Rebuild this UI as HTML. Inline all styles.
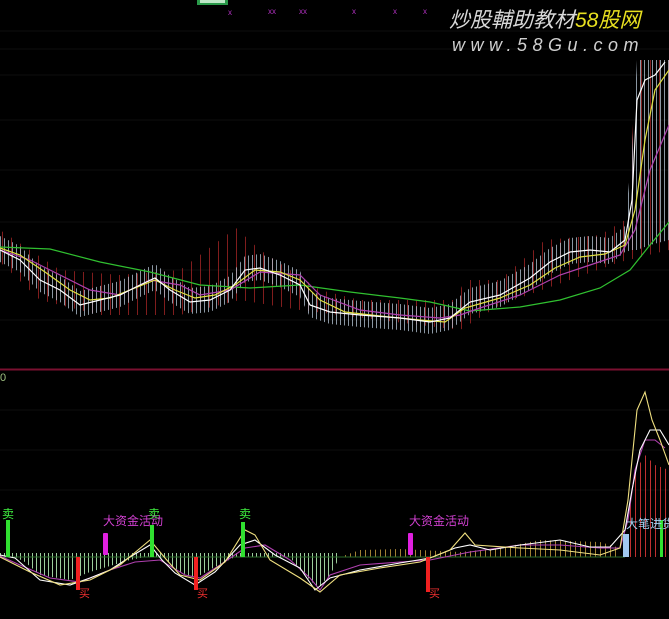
<!DOCTYPE html>
<html><head><meta charset="utf-8"><style>
html,body{margin:0;padding:0;background:#000;width:669px;height:619px;overflow:hidden}
svg{display:block}
text{font-family:"Liberation Sans","Noto Sans CJK SC",sans-serif}
</style></head><body>
<svg width="669" height="619" viewBox="0 0 669 619" xmlns="http://www.w3.org/2000/svg">
<defs>
<pattern id="pw" width="4" height="10" patternUnits="userSpaceOnUse"><rect x="0" y="0" width="1" height="10" fill="#b8c8d8"/></pattern>
<pattern id="pr" width="9" height="10" patternUnits="userSpaceOnUse"><rect x="2" y="0" width="1" height="10" fill="#a02424"/></pattern>
<pattern id="pg" width="4" height="10" patternUnits="userSpaceOnUse"><rect x="0" y="0" width="1" height="10" fill="#b8f0b8"/></pattern>
<pattern id="py" width="5" height="10" patternUnits="userSpaceOnUse"><rect x="0" y="0" width="1" height="10" fill="#c8a040"/></pattern>
<pattern id="pR" width="5" height="10" patternUnits="userSpaceOnUse"><rect x="0" y="0" width="1" height="10" fill="#e03838"/></pattern>
</defs>
<rect width="669" height="619" fill="#000"/>
<g stroke="#0e0e0e" stroke-width="1">
<line x1="0" y1="31" x2="669" y2="31"/><line x1="0" y1="49" x2="669" y2="49"/><line x1="0" y1="75" x2="669" y2="75"/>
<line x1="0" y1="120" x2="669" y2="120"/><line x1="0" y1="170" x2="669" y2="170"/><line x1="0" y1="222" x2="669" y2="222"/><line x1="0" y1="270" x2="669" y2="270"/><line x1="0" y1="320" x2="669" y2="320"/>
<line x1="0" y1="410" x2="669" y2="410"/><line x1="0" y1="450" x2="669" y2="450"/><line x1="0" y1="490" x2="669" y2="490"/>
</g>
<rect x="197" y="0" width="31" height="5" fill="#2a9a4a"/><rect x="200" y="0" width="25" height="3" fill="#bfe8c8"/>
<g fill="#b030c0" font-size="8"><text x="228" y="15">x</text><text x="268" y="14">xx</text><text x="299" y="14">xx</text><text x="352" y="14">x</text><text x="393" y="14">x</text><text x="423" y="14">x</text></g>
<text x="449" y="27" font-size="21" font-style="italic" fill="#d8d8d8">炒股輔助教材<tspan fill="#e8e020">58股网</tspan></text>
<text x="452" y="51" font-size="18" font-style="italic" fill="#d0d0d0" letter-spacing="5.5">www.58Gu.com</text>
<polygon fill="url(#pr)" opacity="0.8" points="0,230 60,270 120,275 180,270 236,228 260,250 320,290 360,300 455,300 465,280 500,280 545,240 600,235 625,220 632,140 637,60 669,60 669,250 620,262 500,305 460,330 300,310 240,300 180,315 100,315 40,300 0,262"/>
<polygon fill="url(#pw)" opacity="0.75" points="0,236 20,246 40,266 60,276 80,291 100,286 120,281 140,271 155,264 170,276 190,288 210,286 230,276 245,256 260,254 280,261 300,271 310,291 330,298 360,301 400,304 430,308 450,304 470,288 500,281 530,264 550,248 570,238 590,236 610,238 625,226 632,150 637,60 669,60 669,240 650,245 637,250 632,250 625,252 610,264 590,262 570,264 550,274 530,290 500,307 470,314 450,330 430,334 400,330 360,327 330,324 310,317 300,297 280,287 260,280 245,282 230,302 210,312 190,314 170,302 155,290 140,297 120,307 100,312 80,317 60,302 40,292 20,272 0,262"/>
<g fill="none" stroke-width="1.2">
<polyline stroke="#30c030" points="0,247 50,249 100,262 150,272 200,285 250,288 300,285 350,292 400,298 430,302 470,311 520,307 560,300 600,288 630,270 650,245 669,222"/>
<polyline stroke="#b040b0" points="0,250 30,260 60,275 90,290 120,295 150,280 180,285 200,295 230,290 260,272 300,275 320,295 360,310 400,315 440,318 460,315 480,308 520,295 560,275 590,265 620,255 635,230 650,170 669,125"/>
<polyline stroke="#e0e040" points="0,248 20,255 45,272 70,290 90,300 110,298 130,290 155,280 175,290 195,298 215,295 235,285 255,270 280,272 300,280 320,300 345,312 380,316 420,320 445,322 465,308 500,298 530,285 555,268 580,257 605,254 625,245 635,210 645,140 655,90 669,70"/>
<polyline stroke="#ffffff" points="0,250 20,260 40,280 60,290 80,305 100,300 120,295 140,285 155,278 170,290 190,302 210,300 230,290 245,270 260,268 280,275 300,285 310,305 330,312 360,315 400,318 430,322 450,318 470,302 500,295 530,278 550,262 570,252 590,250 610,252 625,240 632,200 637,100 645,80 655,75 665,62"/>
</g>
<line x1="0" y1="369.5" x2="669" y2="369.5" stroke="#7a1030" stroke-width="2"/>
<text x="0" y="381" font-size="11" fill="#a0c080">0</text>
<polygon fill="url(#pg)" opacity="0.85" points="15,557 25,562 40,575 70,580 90,572 110,566 130,560 145,557 165,557 175,570 195,578 215,567 235,557 290,557 300,570 318,588 330,575 340,557"/>
<polygon fill="url(#pg)" opacity="0.85" points="0,557 340,557 340,553 0,553"/>
<polygon fill="url(#py)" opacity="0.8" points="340,557 360,550 400,549 460,552 500,548 540,540 600,542 620,548 620,557"/>
<polygon fill="url(#pR)" opacity="0.85" points="628,557 628,520 636,470 645,455 655,465 669,470 669,557"/>
<line x1="0" y1="557" x2="625" y2="557" stroke="#2a6a2a" stroke-width="1"/>
<g fill="none" stroke-width="1.1">
<polyline stroke="#b040b0" points="0,556 20,565 50,578 80,582 110,570 135,562 160,560 185,575 200,578 220,565 245,548 265,545 290,560 310,578 320,590 330,575 360,565 400,562 430,560 470,552 520,545 560,545 600,548 620,548 628,520 635,470 645,440 655,440 665,448"/>
<polyline stroke="#ffffff" points="0,555 15,558 40,580 70,585 90,578 110,570 130,557 150,545 162,560 175,573 195,585 215,572 240,545 255,540 275,555 300,568 315,590 330,578 360,570 400,563 430,558 455,548 470,545 490,550 520,545 560,540 590,547 610,547 625,530 632,490 640,450 650,430 660,430 669,445"/>
<polyline stroke="#f0e080" points="0,557 30,572 60,585 90,580 120,565 150,540 165,558 180,575 200,580 225,562 245,530 255,535 270,560 300,578 320,592 340,575 380,568 420,562 450,550 465,533 475,545 520,548 560,550 600,555 620,548 628,500 637,410 645,392 652,420 660,440 669,465"/>
</g>
<g>
<rect x="6" y="520" width="4" height="37" fill="#30e030"/><text x="2" y="518" font-size="12" fill="#40f040">卖</text>
<rect x="150" y="525" width="4" height="32" fill="#30e030"/><text x="148" y="518" font-size="12" fill="#40f040">卖</text>
<rect x="241" y="522" width="4" height="35" fill="#30e030"/><text x="239" y="518" font-size="12" fill="#40f040">卖</text>
<rect x="103" y="533" width="5" height="22" rx="1" fill="#e020e0"/><text x="103" y="525" font-size="12" fill="#d040d0">大资金活动</text>
<rect x="408" y="533" width="5" height="22" rx="1" fill="#e020e0"/><text x="409" y="525" font-size="12" fill="#d040d0">大资金活动</text>
<rect x="76" y="557" width="4" height="33" fill="#f02020"/><text x="79" y="597" font-size="11" fill="#f03030">买</text>
<rect x="194" y="557" width="4" height="33" fill="#f02020"/><text x="197" y="597" font-size="11" fill="#f03030">买</text>
<rect x="426" y="557" width="4" height="35" fill="#f02020"/><text x="429" y="597" font-size="11" fill="#f03030">买</text>
<rect x="623" y="534" width="6" height="23" fill="#a0c8f0"/>
<rect x="660" y="520" width="3" height="37" fill="#30e030"/>
<text x="626" y="528" font-size="12" fill="#a0d0f0">大笔进货</text>
</g>
</svg>
</body></html>
